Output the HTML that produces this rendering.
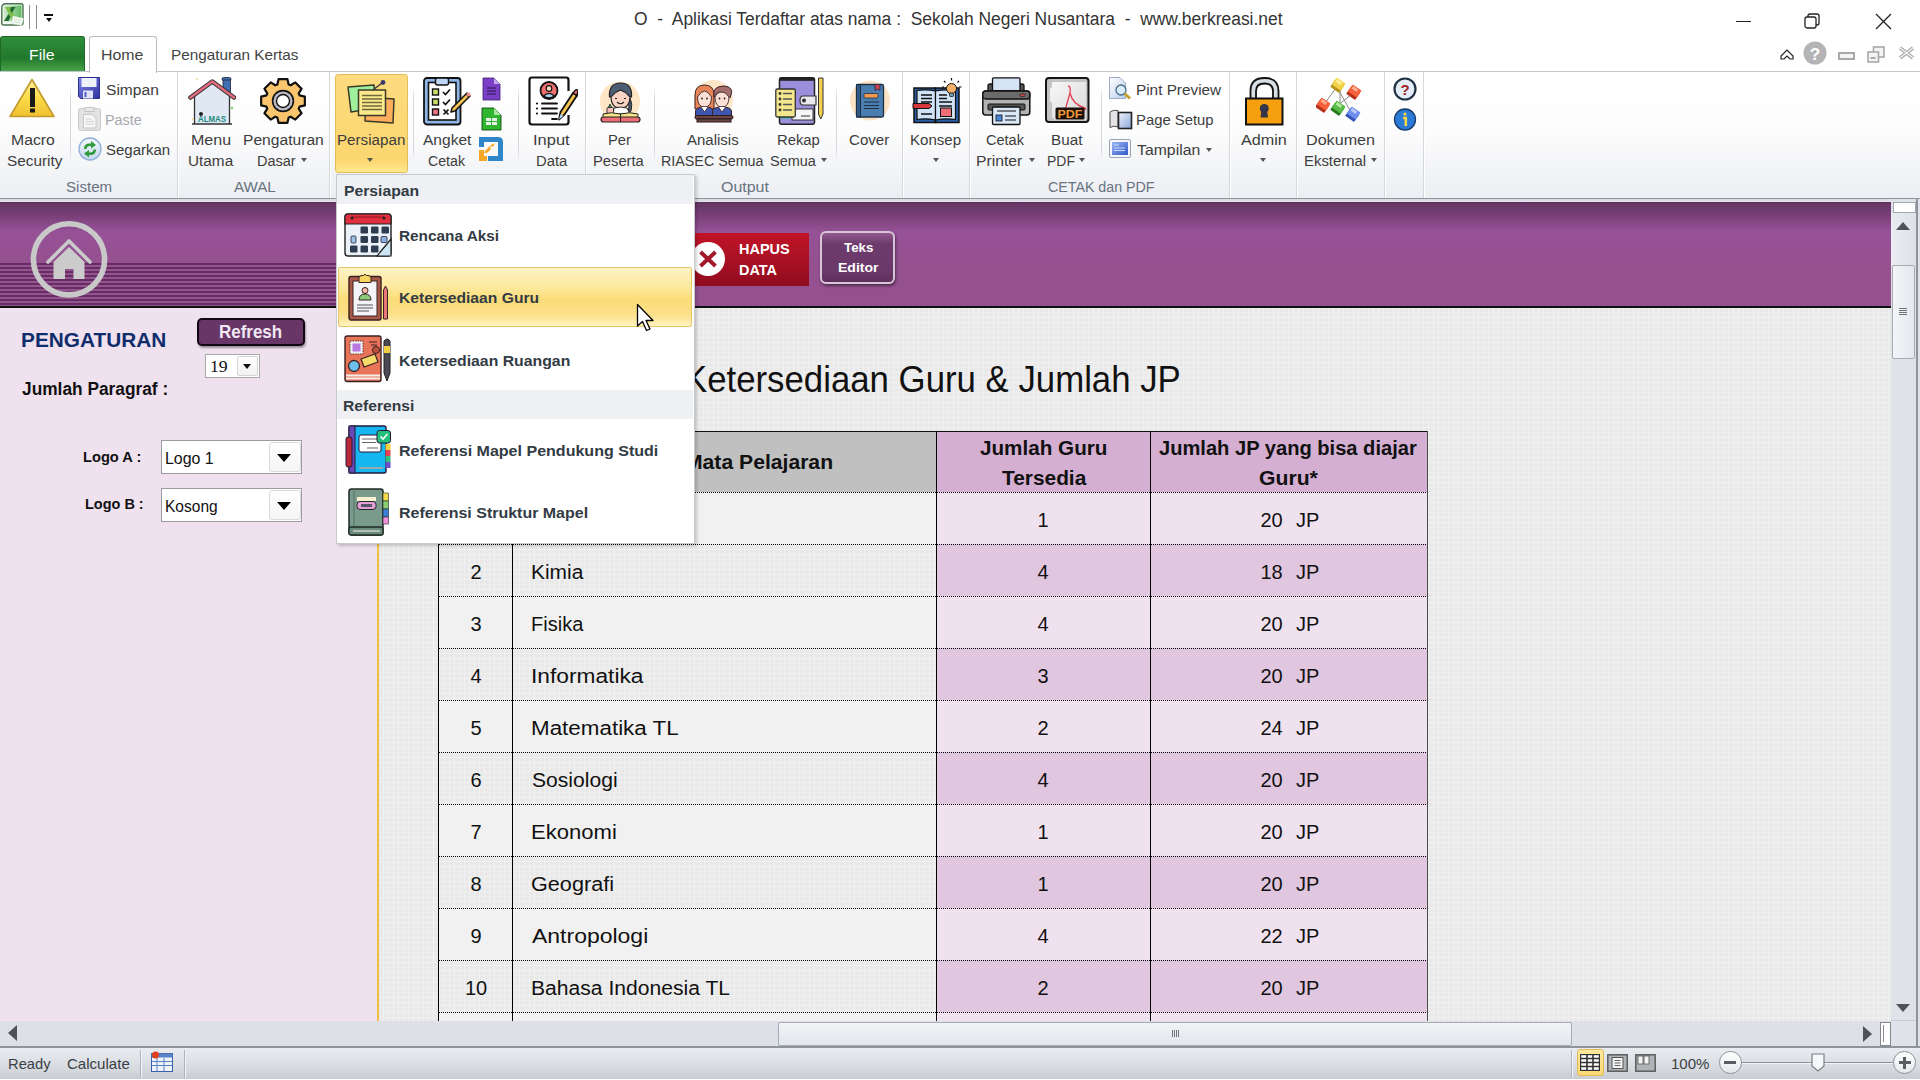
<!DOCTYPE html>
<html><head><meta charset="utf-8">
<style>
*{margin:0;padding:0;box-sizing:border-box}
html,body{width:1920px;height:1080px;overflow:hidden;background:#fff;font-family:"Liberation Sans",sans-serif;position:relative}
.a{position:absolute}
.f{position:absolute;white-space:pre;line-height:1;transform-origin:0 0}
.rl{color:#3d3d3d;font-size:14px}
.gl{color:#687380;font-size:14px}
.mi{color:#333b44;font-size:15px;font-weight:bold}
.sep{position:absolute;width:1px;background:linear-gradient(rgba(210,214,220,0),#d3d7dd 15%,#d3d7dd 85%,rgba(210,214,220,0))}
.gsep{position:absolute;top:72px;height:126px;width:1px;background:#d5d9de;box-shadow:1px 0 0 #fff}
.arr{position:absolute;width:0;height:0;border-left:3.5px solid transparent;border-right:3.5px solid transparent;border-top:4px solid #555}
#title{left:0;top:0;width:1920px;height:36px;background:#fff}
#ribbon{left:0;top:71px;width:1920px;height:128px;background:linear-gradient(#fff 0%,#fdfdfd 45%,#eceef2 100%);border-top:1px solid #c2c6cc;border-bottom:1px solid #8e949b}
#sheet{left:0;top:199px;width:1920px;height:822px;background:#d9dde3}
#grid{left:378px;top:307px;width:1513px;height:714px;background-color:#e9e9e9;
background-image:linear-gradient(90deg,rgba(244,244,244,.75) 1px,transparent 1px),linear-gradient(rgba(244,244,244,.75) 1px,transparent 1px);background-size:5px 5px}
#phead{left:0;top:202px;width:1891px;height:104px;background:linear-gradient(#58305a 0px,#663767 2px,#7a4079 14px,#975297 30px,#94508f 60px,#94508f 104px)}
#stripes{left:0;top:263px;width:378px;height:43px;background:repeating-linear-gradient(#682c64 0px,#682c64 2px,#94548e 2px,#94548e 4px)}
#pline{left:0;top:306px;width:1891px;height:2px;background:#111}
#pink{left:0;top:308px;width:378px;height:713px;background:#f0e1ef}
#yline{left:377px;top:308px;width:2px;height:713px;background:#f2c040}
#hscroll{left:0;top:1021px;width:1891px;height:25px;background:#dde1e7}
#status{left:0;top:1046px;width:1920px;height:33px;background:linear-gradient(#e9ecf0,#d5d9de 70%,#c9cdd3);border-top:2px solid #8e949b}
.tex{background-color:#e9e9e9;background-image:linear-gradient(90deg,rgba(244,244,244,.75) 1px,transparent 1px),linear-gradient(rgba(244,244,244,.75) 1px,transparent 1px);background-size:5px 5px}
.dot{left:439px;width:988px;height:1px;background:repeating-linear-gradient(90deg,#000 0,#000 1px,transparent 1px,transparent 2px)}
.th{font-weight:bold;color:#111}
.td{font-size:20px;color:#111}
.tc{width:100px;text-align:center;font-size:20px;line-height:1;color:#111;white-space:pre}
</style></head><body>
<!-- TITLE BAR -->
<div id="title" class="a"></div>
<svg class="a" style="left:1px;top:3px" width="23" height="23" viewBox="0 0 23 23">
 <defs><linearGradient id="xg" x1="0" y1="0" x2="1" y2="0"><stop offset="0" stop-color="#d4ead2"></stop><stop offset="1" stop-color="#5fb860"></stop></linearGradient></defs>
 <path d="M5 0.8 H20 Q22 0.8 22 2.8 V20 Q22 22 20 22 H2.8 Q0.8 22 0.8 20 V5 Q0.8 0.8 5 0.8Z" fill="#f4faf4" stroke="#45724a" stroke-width="1.4"></path>
 <rect x="2.5" y="2.5" width="18" height="16" fill="url(#xg)"></rect>
 <path d="M4 4 H9 L16 17 H11Z" fill="#7cbf4a"></path>
 <path d="M10 4 H14.5 L11 10 L9 7Z M7.5 11 L9.5 14 L7.5 18 H3Z" fill="#1f6b30"></path>
 <path d="M12 13 L22.5 15.5 L20.5 22.5 L10.5 20.5Z" fill="#fbfdfb" stroke="#cfe3cf" stroke-width=".6"></path>
 <path d="M13 16 L20 17.5 M12.5 18.5 L19.5 20" stroke="#b9d6b9" stroke-width=".8"></path>
</svg>
<div class="a" style="left:29px;top:5px;width:1px;height:24px;background:#8c8c8c"></div>
<div class="a" style="left:36px;top:5px;width:1px;height:24px;background:#8c8c8c"></div>
<div class="a" style="left:44px;top:14px;width:9px;height:1.5px;background:#111"></div>
<div class="a" style="left:46px;top:18px;width:0;height:0;border-left:3px solid transparent;border-right:3px solid transparent;border-top:4px solid #111"></div>
<div class="f" style="left: 634px; top: 9.763px; width: auto; font-size: 18px; color: rgb(51, 51, 51); transform: scaleX(0.968);">O  -  Aplikasi Terdaftar atas nama :  Sekolah Negeri Nusantara  -  www.berkreasi.net</div>
<!-- window controls -->
<div class="a" style="left:1736px;top:21px;width:15px;height:1px;background:#222"></div>
<svg class="a" style="left:1804px;top:13px" width="17" height="17" viewBox="0 0 17 17"><rect x="1" y="4" width="11" height="11" rx="2" fill="none" stroke="#222" stroke-width="1.3"></rect><path d="M4 4 V3 a2 2 0 0 1 2 -2 H13 a2 2 0 0 1 2 2 V10 a2 2 0 0 1 -2 2 H12" fill="none" stroke="#222" stroke-width="1.3"></path></svg>
<svg class="a" style="left:1875px;top:13px" width="17" height="17" viewBox="0 0 17 17"><path d="M1 1 L16 16 M16 1 L1 16" stroke="#222" stroke-width="1.3"></path></svg>
<!-- TABS -->
<div class="a" style="left:0;top:36px;width:85px;height:36px;border-radius:3px 3px 0 0;background:linear-gradient(#2f8f3a,#22782c 60%,#4ca64a);border:1px solid #1d6a27;border-bottom:none"></div>
<div class="f" style="left: 28.948px; top: 47.302px; width: auto; font-size: 15px; color: rgb(255, 255, 255); transform: scaleX(1.051);">File</div>
<div class="a" style="left:89px;top:36px;width:68px;height:37px;border:1px solid #b9bdc3;border-bottom:none;border-radius:3px 3px 0 0;background:#fff;z-index:3"></div>
<div class="f" style="left: 101.44px; top: 47.302px; width: auto; font-size: 15px; color: rgb(68, 68, 68); z-index: 4; transform: scaleX(1.060);">Home</div>
<div class="f" style="left: 171.48px; top: 47.302px; width: auto; font-size: 15px; color: rgb(68, 68, 68); transform: scaleX(1.019);">Pengaturan Kertas</div>
<!-- small right icons -->
<svg class="a" style="left:1780px;top:49px" width="14" height="11" viewBox="0 0 14 11"><path d="M1 10 V7 L7 1 L13 7 V10 H10 L7 7 L4 10Z" fill="#fff" stroke="#222" stroke-width="1.2"></path></svg>
<svg class="a" style="left:1803px;top:41px" width="24" height="24" viewBox="0 0 24 24"><circle cx="12" cy="12" r="11.5" fill="#b4b4b6"></circle><text x="12" y="18.5" font-family="Liberation Sans" font-weight="bold" font-size="17" fill="#fff" text-anchor="middle">?</text></svg>
<div class="a" style="left:1838px;top:52px;width:17px;height:8px;border:2px solid #a9a9ab;background:#f4f4f4"></div>
<svg class="a" style="left:1867px;top:46px" width="18" height="17" viewBox="0 0 18 17"><rect x="6.5" y="1" width="10.5" height="10" fill="#f4f4f4" stroke="#a9a9ab" stroke-width="1.6"></rect><rect x="1" y="6" width="10.5" height="10" fill="#f4f4f4" stroke="#a9a9ab" stroke-width="1.6"></rect><rect x="3.5" y="11" width="5" height="2" fill="#a9a9ab"></rect></svg>
<svg class="a" style="left:1898px;top:46px" width="17" height="14" viewBox="0 0 17 14"><path d="M2 2 L15 12 M15 2 L2 12" stroke="#a9a9ab" stroke-width="3.5"></path><path d="M2 2 L15 12 M15 2 L2 12" stroke="#f4f4f4" stroke-width="1.4"></path></svg>
<!-- RIBBON -->
<div id="ribbon" class="a"></div>
<div class="a" style="left:0;top:71px;width:89px;height:1px;background:#c2c6cc;z-index:2"></div>
<!-- group separators -->
<div class="gsep" style="left:177px"></div>
<div class="gsep" style="left:329px"></div>
<div class="gsep" style="left:585px"></div>
<div class="gsep" style="left:902px"></div>
<div class="gsep" style="left:969px"></div>
<div class="gsep" style="left:1229px"></div>
<div class="gsep" style="left:1296px"></div>
<div class="gsep" style="left:1384px"></div>
<div class="gsep" style="left:1423px"></div>
<!-- inner separators -->
<div class="sep" style="left:70px;top:87px;height:73px"></div>
<div class="sep" style="left:413px;top:87px;height:73px"></div>
<div class="sep" style="left:518px;top:87px;height:73px"></div>
<div class="sep" style="left:654px;top:87px;height:73px"></div>
<div class="sep" style="left:836px;top:87px;height:73px"></div>
<div class="sep" style="left:1101px;top:87px;height:73px"></div>
<!-- group labels -->
<div class="f gl" style="left: 65.6px; top: 179.549px; width: auto; transform: scaleX(1.077);">Sistem</div>
<div class="f gl" style="left: 233.7px; top: 179.549px; width: auto; transform: scaleX(1.081);">AWAL</div>
<div class="f gl" style="left: 720.6px; top: 179.549px; width: auto; transform: scaleX(1.139);">Output</div>
<div class="f gl" style="left: 1047.5px; top: 179.549px; width: auto; transform: scaleX(1.017);">CETAK dan PDF</div>
<!-- Persiapan highlight button -->
<div class="a" style="left:335px;top:74px;width:73px;height:99px;border:1px solid #e3bd5a;border-radius:3px;background:linear-gradient(#fddb7e 0%,#fcd874 60%,#fcd670 88%,#fee98e 100%)"></div>
<!-- ribbon labels -->
<div class="f rl" style="left: 11.371px; top: 132.649px; width: auto; transform: scaleX(1.128);">Macro</div>
<div class="f rl" style="left: 6.5px; top: 153.649px; width: auto; transform: scaleX(1.097);">Security</div>
<div class="f rl" style="left: 105.6px; top: 83.149px; width: auto; transform: scaleX(1.113);">Simpan</div>
<div class="f rl" style="left: 104.972px; top: 113.149px; width: auto; color: rgb(165, 169, 174); transform: scaleX(1.028);">Paste</div>
<div class="f rl" style="left: 106px; top: 143.149px; width: auto; transform: scaleX(1.071);">Segarkan</div>
<div class="f rl" style="left: 190.757px; top: 132.649px; width: auto; transform: scaleX(1.143);">Menu</div>
<div class="f rl" style="left: 187.605px; top: 153.649px; width: auto; transform: scaleX(1.095);">Utama</div>
<div class="f rl" style="left: 242.584px; top: 132.649px; width: auto; transform: scaleX(1.116);">Pengaturan</div>
<div class="f rl" style="left: 256.964px; top: 153.649px; width: auto; transform: scaleX(1.035);">Dasar</div>
<div class="arr" style="left:301px;top:158px"></div>
<div class="f rl" style="left: 336.916px; top: 132.649px; width: auto; transform: scaleX(1.084);">Persiapan</div>
<div class="arr" style="left:367px;top:158px"></div>
<div class="f rl" style="left: 422.5px; top: 132.649px; width: auto; transform: scaleX(1.109);">Angket</div>
<div class="f rl" style="left: 427.5px; top: 153.649px; width: auto; transform: scaleX(1.011);">Cetak</div>
<div class="f rl" style="left: 533.223px; top: 132.649px; width: auto; transform: scaleX(1.176);">Input</div>
<div class="f rl" style="left: 535.94px; top: 153.649px; width: auto; transform: scaleX(1.059);">Data</div>
<div class="f rl" style="left: 607.644px; top: 132.649px; width: auto; transform: scaleX(1.055);">Per</div>
<div class="f rl" style="left: 593.347px; top: 153.649px; width: auto; transform: scaleX(1.053);">Peserta</div>
<div class="f rl" style="left: 687px; top: 132.649px; width: auto; transform: scaleX(1.071);">Analisis</div>
<div class="f rl" style="left: 660.979px; top: 153.649px; width: auto; transform: scaleX(1.021);">RIASEC Semua</div>
<div class="f rl" style="left: 776.942px; top: 132.649px; width: auto; transform: scaleX(1.058);">Rekap</div>
<div class="f rl" style="left: 770px; top: 153.649px; width: auto; transform: scaleX(1.032);">Semua</div>
<div class="arr" style="left:821px;top:158px"></div>
<div class="f rl" style="left: 849.4px; top: 132.649px; width: auto; transform: scaleX(1.077);">Cover</div>
<div class="f rl" style="left: 909.925px; top: 132.649px; width: auto; transform: scaleX(1.075);">Konsep</div>
<div class="arr" style="left:932.5px;top:158px"></div>
<div class="f rl" style="left: 986px; top: 132.649px; width: auto; transform: scaleX(1.038);">Cetak</div>
<div class="f rl" style="left: 976.379px; top: 153.649px; width: auto; transform: scaleX(1.121);">Printer</div>
<div class="arr" style="left:1028.5px;top:158px"></div>
<div class="f rl" style="left: 1050.91px; top: 132.649px; width: auto; transform: scaleX(1.092);">Buat</div>
<div class="f rl" style="left: 1047px; top: 153.649px; width: auto; transform: scaleX(0.998);">PDF</div>
<div class="arr" style="left:1078.5px;top:158px"></div>
<div class="f rl" style="left: 1135.91px; top: 83.149px; width: auto; transform: scaleX(1.094);">Pint Preview</div>
<div class="f rl" style="left: 1135.94px; top: 113.149px; width: auto; transform: scaleX(1.059);">Page Setup</div>
<div class="f rl" style="left: 1137px; top: 143.149px; width: auto; transform: scaleX(1.129);">Tampilan</div>
<div class="arr" style="left:1205.5px;top:148px"></div>
<div class="f rl" style="left: 1240.6px; top: 132.649px; width: auto; transform: scaleX(1.156);">Admin</div>
<div class="arr" style="left:1260.2px;top:158px"></div>
<div class="f rl" style="left: 1306.35px; top: 132.649px; width: auto; transform: scaleX(1.152);">Dokumen</div>
<div class="f rl" style="left: 1303.93px; top: 153.649px; width: auto; transform: scaleX(1.065);">Eksternal</div>
<div class="arr" style="left:1371px;top:158px"></div>
<!-- RIBBON ICONS -->
<svg class="a" style="left:8px;top:78px" width="48" height="41" viewBox="0 0 48 41">
 <defs><linearGradient id="wg" x1="0" y1="0" x2="0" y2="1"><stop offset="0" stop-color="#fff3a0"></stop><stop offset=".5" stop-color="#fbdc4a"></stop><stop offset="1" stop-color="#f0c030"></stop></linearGradient></defs>
 <path d="M24 1.5 L46 38.5 H2 Z" fill="url(#wg)" stroke="#c29a2e" stroke-width="1.6" stroke-linejoin="round"></path>
 <rect x="22" y="10" width="5" height="19" fill="#1a1a1a"></rect><rect x="22" y="30.5" width="5" height="4" fill="#1a1a1a"></rect>
</svg>
<svg class="a" style="left:78px;top:77px" width="23" height="23" viewBox="0 0 23 23">
 <defs><linearGradient id="fg" x1="0" y1="0" x2="1" y2="1"><stop offset="0" stop-color="#7c82e8"></stop><stop offset="1" stop-color="#2f33a0"></stop></linearGradient></defs>
 <path d="M0.5 0.5 H21.5 V21.5 H2.5 L0.5 19.5Z" fill="url(#fg)" stroke="#2a2e8c"></path>
 <rect x="3.5" y="1" width="15" height="9" fill="#eef0fa"></rect>
 <rect x="5" y="13.5" width="10" height="8" fill="#dfe3f5"></rect><rect x="6.5" y="15" width="2" height="5" fill="#5860c8"></rect>
</svg>
<svg class="a" style="left:78px;top:107px" width="24" height="24" viewBox="0 0 24 24">
 <rect x="0.5" y="1.5" width="22" height="22" rx="2" fill="#e2e2e5" stroke="#cacacd"></rect>
 <rect x="7" y="0.5" width="9" height="4" fill="#e9e9ec" stroke="#c5c5c8"></rect>
 <path d="M5.5 7.5 H14 L18 11.5 V21 H5.5Z" fill="#f7f7f8" stroke="#c8c8cb"></path>
 <path d="M7.5 12 H13 M7.5 14.5 H16 M7.5 17 H16" stroke="#d0d0d3"></path>
</svg>
<svg class="a" style="left:78px;top:137px" width="24" height="24" viewBox="0 0 24 24">
 <defs><linearGradient id="sg" x1="0" y1="0" x2="0" y2="1"><stop offset="0" stop-color="#f4f8fd"></stop><stop offset="1" stop-color="#c4d8f0"></stop></linearGradient></defs>
 <circle cx="12" cy="12" r="11" fill="url(#sg)" stroke="#8fb0d8" stroke-width="1.3"></circle>
 <path d="M6 12 C6 7.5 9 6 13 6.5 V4 L18 8 L13 11.5 V9 C10 8.5 8.5 10 8.5 12Z" fill="#2e9a3a"></path>
 <path d="M18 12.5 C18 17 15 18.5 11 18 V20.5 L6 16.5 L11 13 V15.5 C14 16 15.5 14.5 15.5 12.5Z" fill="#2e9a3a"></path>
</svg>
<svg class="a" style="left:188px;top:76px" width="48" height="50" viewBox="0 0 48 50">
 <rect x="34" y="1.5" width="9" height="3" rx="1.5" fill="#3f6fb5" stroke="#223" stroke-width=".8"></rect>
 <rect x="35" y="4" width="7.5" height="12" fill="#3f6fb5" stroke="#223" stroke-width=".8"></rect>
 <path d="M6.5 20 L24 7 L41.5 20 V48 H6.5Z" fill="#dfe8f3"></path>
 <path d="M6.5 20 V48 M41.5 20 V48 M4 48 H44" stroke="#333" stroke-width="1.3"></path>
 <path d="M2.5 21.5 L24.3 5.5 L46 21.5" fill="none" stroke="#333" stroke-width="4.6" stroke-linecap="round" stroke-linejoin="round"></path>
 <path d="M2.5 21.5 L24.3 5.5 L46 21.5" fill="none" stroke="#e46a7c" stroke-width="2.6" stroke-linecap="round" stroke-linejoin="round"></path>
 <text x="24" y="46" font-family="Liberation Sans" font-weight="bold" font-size="9.5" fill="#208a80" text-anchor="middle" textLength="28" lengthAdjust="spacingAndGlyphs">ALMAS</text>
 <circle cx="13" cy="38" r="2" fill="#222"></circle>
 <circle cx="44" cy="32" r="1.2" fill="#7ad060"></circle><circle cx="5" cy="43" r="1" fill="#f0d890"></circle><circle cx="9" cy="3" r="1" fill="#f0d890"></circle>
</svg>
<svg class="a" style="left:259px;top:77px" width="48" height="48" viewBox="0 0 48 48">
 <path d="M40.56 18.33 L45.86 19.57 L45.86 28.43 L40.56 29.67 L39.72 31.70 L42.59 36.32 L36.32 42.59 L31.70 39.72 L29.67 40.56 L28.43 45.86 L19.57 45.86 L18.33 40.56 L16.30 39.72 L11.68 42.59 L5.41 36.32 L8.28 31.70 L7.44 29.67 L2.14 28.43 L2.14 19.57 L7.44 18.33 L8.28 16.30 L5.41 11.68 L11.68 5.41 L16.30 8.28 L18.33 7.44 L19.57 2.14 L28.43 2.14 L29.67 7.44 L31.70 8.28 L36.32 5.41 L42.59 11.68 L39.72 16.30Z" fill="#fac56c" stroke="#111" stroke-width="2.2" stroke-linejoin="round"></path>
 <circle cx="24" cy="24" r="11.2" fill="#111"></circle>
 <circle cx="24" cy="24" r="9.6" fill="#b9bac4"></circle>
 <circle cx="24" cy="24" r="7.2" fill="#111"></circle>
 <circle cx="24" cy="24" r="5.8" fill="#fff"></circle>
</svg>
<svg class="a" style="left:346px;top:80px" width="50" height="44" viewBox="0 0 50 44">
 <path d="M2 7 L28 5 L30 28 L5 32Z" fill="#9ff09a" stroke="#3a3a2a" stroke-width="1.5" stroke-linejoin="round"></path>
 <path d="M20 17 L48 19 L47 43 L19 41Z" fill="#fcae5c" stroke="#3a3a2a" stroke-width="1.5" stroke-linejoin="round"></path>
 <rect x="12.5" y="10" width="27" height="25.5" fill="#fbe98c" stroke="#3a3a2a" stroke-width="1.5"></rect>
 <path d="M16 15.5 H36 M16 19 H36 M16 22.5 H36 M16 26 H36 M16 29.5 H36" stroke="#6e6a3c" stroke-width="1.6"></path>
 <path d="M27 10 L36 3" stroke="#333" stroke-width="1.2"></path><circle cx="37" cy="2.5" r="2.4" fill="#3a3a6a"></circle>
</svg>
<svg class="a" style="left:423px;top:77px" width="48" height="49" viewBox="0 0 48 49">
 <rect x="1" y="1" width="36.5" height="46.5" rx="3" fill="#8db6e6" stroke="#111" stroke-width="1.8"></rect>
 <rect x="5.5" y="5.5" width="27.5" height="37.5" fill="#fff" stroke="#111" stroke-width="1.6"></rect>
 <rect x="12.5" y="1" width="13" height="7" rx="2" fill="#bcd6f4" stroke="#111" stroke-width="1.4"></rect>
 <rect x="9.5" y="12" width="6" height="6" fill="#c8e06a" stroke="#111" stroke-width="1.4"></rect>
 <rect x="9.5" y="22" width="6" height="6" fill="#c8e06a" stroke="#111" stroke-width="1.4"></rect>
 <rect x="9.5" y="32" width="6" height="6" fill="#f07484" stroke="#111" stroke-width="1.4"></rect>
 <path d="M20 15 L22.5 17.5 L27 12.5 M20 25 L22.5 27.5 L27 22.5 M20.5 32.5 L25.5 37.5 M25.5 32.5 L20.5 37.5" fill="none" stroke="#111" stroke-width="1.7"></path>
 <path d="M29 31 L44 16 L47 19 L32 34 L28 35Z" fill="#f6c453" stroke="#111" stroke-width="1.5" stroke-linejoin="round"></path>
 <path d="M43 17 L46 20" stroke="#111" stroke-width="1.2"></path><circle cx="45.5" cy="17.5" r="2" fill="#f08b8b"></circle>
</svg>
<svg class="a" style="left:482px;top:77px" width="19" height="24" viewBox="0 0 19 24">
 <path d="M1 1 H12 L18 7 V23 H1Z" fill="#7b3fc6" stroke="#3a1f6e" stroke-width=".8"></path>
 <path d="M12 1 V7 H18Z" fill="#c6a9ec"></path>
 <path d="M5 11 H14 M5 14 H14 M5 17 H14" stroke="#3f2577" stroke-width="1.4"></path>
</svg>
<svg class="a" style="left:481px;top:107px" width="21" height="24" viewBox="0 0 21 24">
 <path d="M1 1 H13 L20 8 V23 H1Z" fill="#2fb52f" stroke="#134a13" stroke-width=".9"></path>
 <path d="M13 1 V8 H20Z" fill="#a6e6a0"></path>
 <rect x="5" y="11" width="11" height="7" fill="#e9eee9"></rect><path d="M5 14.5 H16 M10.5 11 V18" stroke="#2fb52f" stroke-width="1"></path>
</svg>
<svg class="a" style="left:479px;top:137px" width="24" height="24" viewBox="0 0 24 24">
 <path d="M0 0 H19 Q24 0 24 5 V24 H9 V19 H19 V5 H5 V10 H0Z" fill="#2f86c8"></path>
 <path d="M0 13 H5 V19 H8 V24 H0Z" fill="#f5a623"></path>
 <path d="M5 16 L8 16 L14 10 L16 6 L12 8 L6 14Z" fill="#f5a623"></path>
 <circle cx="12.5" cy="10.5" r="1.3" fill="#fff"></circle>
</svg>
<svg class="a" style="left:528px;top:76px" width="50" height="50" viewBox="0 0 50 50">
 <path d="M40.5 15 V4 Q40.5 1.5 38 1.5 H4 Q1.5 1.5 1.5 4 V46 Q1.5 48.5 4 48.5 H38 Q40.5 48.5 40.5 46 V39" fill="#fff" stroke="#111" stroke-width="2.2"></path>
 <path d="M1.5 4 V46 M4 48.5 H38" fill="none"></path>
 <circle cx="21" cy="14.5" r="8.5" fill="#f07070" stroke="#111" stroke-width="1.8"></circle>
 <circle cx="21" cy="12.5" r="2.8" fill="#f8d9c0" stroke="#111" stroke-width="1.2"></circle>
 <path d="M15.5 20 Q21 14.5 26.5 20 Q21 23.5 15.5 20Z" fill="#a8d4f2" stroke="#111" stroke-width="1.2"></path>
 <path d="M14 27.5 H29 M14 32.5 H29 M14 37.5 H29 M24 43 H29" stroke="#111" stroke-width="1.8" stroke-linecap="round"></path>
 <circle cx="9" cy="27.5" r="1.1" fill="#111"></circle><circle cx="9" cy="32.5" r="1.1" fill="#111"></circle><circle cx="9" cy="37.5" r="1.1" fill="#111"></circle>
 <path d="M31 43.5 L32.5 36 L45 17 L49 19.5 L36.5 38.5Z" fill="#f6c453" stroke="#111" stroke-width="1.8" stroke-linejoin="round"></path>
 <path d="M45 17 L47 14.5 Q48.5 13 50 14.5 L49 19.5Z" fill="#f07070" stroke="#111" stroke-width="1.4"></path>
 <path d="M31 43.5 L32.5 38 L35.5 40Z" fill="#a8d4f2"></path>
</svg>
<svg class="a" style="left:599px;top:80px" width="43" height="43" viewBox="0 0 43 43">
 <circle cx="21" cy="21.5" r="20" fill="#fde5c6"></circle>
 <path d="M31 18 Q34 24 32 31 L29 33 Q31 26 29 20Z" fill="#4d5d74" stroke="#222" stroke-width="1"></path>
 <path d="M12 16 Q12 28 21.5 28 Q31 28 31 16 Q31 9 21.5 9 Q12 9 12 16Z" fill="#f9d3c4" stroke="#222" stroke-width="1.2"></path>
 <path d="M10.5 17 Q9.5 3 21.5 3 Q33.5 3 32.5 17 L30 16 Q27 12 21.5 10 Q16 12 13 16Z" fill="#4d5d74" stroke="#222" stroke-width="1.2"></path>
 <path d="M18 22 Q21.5 25.5 25 22" fill="none" stroke="#222" stroke-width="1.1"></path>
 <path d="M16 18.5 H18 M25 18.5 H27" stroke="#222" stroke-width="1.2"></path>
 <path d="M14 34 L15 28 Q21.5 26 28 28 L31 34Z" fill="#fff" stroke="#222" stroke-width="1"></path>
 <path d="M9 28 L11 24 L13 28" fill="#2f9a78" stroke="#222" stroke-width=".8"></path>
 <rect x="8" y="27.5" width="6.5" height="6" rx="1" fill="#f8c0b8" stroke="#222" stroke-width=".9"></rect>
 <path d="M4 37.5 V34 Q12 31.5 21.5 34 Q31 31.5 39 34 V37.5Z" fill="#f6e58a" stroke="#222" stroke-width="1"></path>
 <rect x="2" y="37" width="39" height="5" rx="2.5" fill="#ee6e76" stroke="#222" stroke-width="1.2"></rect>
 <path d="M21.5 34 V42" stroke="#222" stroke-width="1"></path>
</svg>
<svg class="a" style="left:692px;top:80px" width="43" height="43" viewBox="0 0 43 43">
 <circle cx="21.5" cy="19.5" r="19.5" fill="#fde6c8"></circle>
 <path d="M3 29 V15 Q3 5 12.5 5 Q22 5 22 15 V29Z" fill="#e8845a" stroke="#3a2323" stroke-width="1"></path>
 <path d="M5.5 17 Q5.5 27 12.5 27 Q19.5 27 19.5 17 Q16 11 12.5 11 Q9 11 5.5 17Z" fill="#fbe0d8" stroke="#3a2323" stroke-width=".9"></path>
 <path d="M22 17 Q20 6 32 6 Q42 7 39 15 L38 18 Q33 12 27 12 Q23 14 22 17Z" fill="#a66e6e" stroke="#3a2323" stroke-width="1"></path>
 <path d="M23 17 Q23 27 30 27 Q37 27 37 17 Q34 12 30 12 Q25 12 23 17Z" fill="#fbe0d8" stroke="#3a2323" stroke-width=".9"></path>
 <circle cx="10" cy="18.5" r=".9" fill="#222"></circle><circle cx="15" cy="18.5" r=".9" fill="#222"></circle><circle cx="27.5" cy="18.5" r=".9" fill="#222"></circle><circle cx="32.5" cy="18.5" r=".9" fill="#222"></circle>
 <path d="M3.5 36 V31 Q4 27 12.5 27 Q21 27 21.5 31 V36Z" fill="#3f56b0" stroke="#3a2323" stroke-width="1"></path>
 <path d="M20.5 36 V31 Q21 27 30 27 Q39 27 39.5 31 V36Z" fill="#3f56b0" stroke="#3a2323" stroke-width="1"></path>
 <path d="M9 27 L12.5 32 L16 27 M26.5 27 L30 32 L33.5 27" fill="#fff" stroke="#3a2323" stroke-width=".8"></path>
 <rect x="3" y="35.5" width="38" height="3.5" rx="1.5" fill="#6b4444" stroke="#2a1a1a" stroke-width="1"></rect>
 <rect x="5" y="39" width="34" height="3" fill="#6b4444" stroke="#2a1a1a" stroke-width="1"></rect>
</svg>
<svg class="a" style="left:775px;top:77px" width="49" height="48" viewBox="0 0 49 48">
 <rect x="4.5" y="0.8" width="35" height="46.5" rx="2" fill="#9b8fdb" stroke="#222" stroke-width="1.5"></rect>
 <rect x="4.5" y="0.8" width="35" height="3" fill="#222"></rect>
 <rect x="17" y="32" width="21" height="11" fill="#f6f6f8" stroke="#333" stroke-width="1"></rect>
 <path d="M26 39 H35" stroke="#555" stroke-width="1.2"></path>
 <rect x="5" y="37.5" width="10" height="4" fill="#2fc88e"></rect>
 <path d="M28 19 H41 V28 H28 Q25 28 25 23.5 Q25 19 28 19Z" fill="#e8e8ee" stroke="#333" stroke-width="1.2"></path>
 <circle cx="29" cy="23.5" r="2" fill="#333"></circle>
 <rect x="0.8" y="12" width="19.5" height="28" rx="1.5" fill="#f3e68c" stroke="#333" stroke-width="1.3"></rect>
 <path d="M8 16.5 H17 M8 22 H17 M8 27.5 H17 M8 33 H17" stroke="#555" stroke-width="1.5"></path>
 <circle cx="5" cy="16.5" r="1.4" fill="#333"></circle><circle cx="5" cy="22" r="1.4" fill="#333"></circle><circle cx="5" cy="27.5" r="1.4" fill="#333"></circle><circle cx="5" cy="33" r="1.4" fill="#333"></circle>
 <path d="M43.5 1 H48 V37 L45.75 42 L43.5 37Z" fill="#f0d050" stroke="#333" stroke-width="1"></path>
</svg>
<svg class="a" style="left:849px;top:80px" width="43" height="43" viewBox="0 0 43 43">
 <circle cx="21" cy="20.5" r="20" fill="#fde3c6"></circle>
 <rect x="7.5" y="4.5" width="27" height="32.5" rx="1.5" fill="#4a7eb0" stroke="#1f2f44" stroke-width="1.3"></rect>
 <rect x="7.5" y="4.5" width="4" height="32.5" fill="#2f5a88" stroke="#1f2f44" stroke-width="1"></rect>
 <rect x="15" y="13.5" width="14" height="4.5" rx="1" fill="#f39a50" stroke="#1f2f44" stroke-width=".8"></rect>
 <path d="M15 22 H30 M15 25.5 H30 M15 28.5 H30" stroke="#1f2f44" stroke-width="1.2"></path>
 <path d="M26 4.5 V10.5 L28.5 9 L31 10.5 V4.5Z" fill="#d04050" stroke="#1f2f44" stroke-width=".8"></path>
</svg>
<svg class="a" style="left:912px;top:77px" width="50" height="48" viewBox="0 0 50 48">
 <path d="M2 11 H23.5 V45.5 H2Z" fill="#2a5fa8" stroke="#111" stroke-width="1.5"></path>
 <path d="M23.5 11 H47 V45.5 H23.5Z" fill="#2a5fa8" stroke="#111" stroke-width="1.5"></path>
 <path d="M5 13.5 Q14 12 23.5 14 V43 Q14 41 5 42.5Z" fill="#cfe2f6" stroke="#111" stroke-width="1.2"></path>
 <path d="M23.5 14 Q33 12 43.5 13.5 V42.5 Q33 41 23.5 43Z" fill="#cfe2f6" stroke="#111" stroke-width="1.2"></path>
 <path d="M9 18 H20 M9 21.5 H20 M9 25 H20 M9 37 H20 M27 18 H35 M27 21.5 H35 M27 25 H40 M27 29 H40" stroke="#111" stroke-width="1.3"></path>
 <path d="M1 26.5 H17 L20 29 L17 31.5 H1Z" fill="#d8363e" stroke="#111" stroke-width="1"></path>
 <rect x="28.5" y="31" width="11" height="8.5" fill="#ef6f78" stroke="#111" stroke-width="1"></rect>
 <circle cx="39.5" cy="11.5" r="5" fill="#f6b26b" stroke="#111" stroke-width="1"></circle>
 <rect x="37.5" y="16" width="4" height="3.5" rx="1" fill="#7a9ab0" stroke="#111" stroke-width=".8"></rect>
 <path d="M39.5 1 V3.5 M32 4 L33.5 5.5 M47 4 L45.5 5.5 M30 10 H32 M47 10 H49.5" stroke="#111" stroke-width="1.2"></path>
</svg>
<svg class="a" style="left:982px;top:77px" width="49" height="49" viewBox="0 0 49 49">
 <rect x="6" y="7" width="36" height="10" rx="2" fill="#555" stroke="#111" stroke-width="1.3"></rect>
 <rect x="10.5" y="0.8" width="27.5" height="13" rx="1.2" fill="#d5e3f5" stroke="#111" stroke-width="1.3"></rect>
 <rect x="0.8" y="14" width="47" height="24" rx="3" fill="#b4b4b4" stroke="#111" stroke-width="1.5"></rect>
 <rect x="0.8" y="14" width="47" height="8" rx="3" fill="#6b6b6b" stroke="#111" stroke-width="1.3"></rect>
 <rect x="38" y="17" width="5" height="2.5" rx="1" fill="#d04848" stroke="#111" stroke-width=".6"></rect>
 <rect x="6" y="27" width="37" height="6" rx="1" fill="#555" stroke="#111" stroke-width="1"></rect>
 <rect x="10.5" y="30" width="27.5" height="17.5" rx="1" fill="#dae7f6" stroke="#111" stroke-width="1.3"></rect>
 <rect x="14" y="38" width="6" height="6" fill="#4a86d8" stroke="#111" stroke-width=".8"></rect>
 <path d="M15 34 H34 M23 39 H34 M23 43 H34" stroke="#111" stroke-width="1.2"></path>
</svg>
<svg class="a" style="left:1045px;top:77px" width="45" height="46" viewBox="0 0 45 46">
 <defs><linearGradient id="pg" x1="0" y1="0" x2="1" y2="1"><stop offset="0" stop-color="#f8f8f8"></stop><stop offset="1" stop-color="#d8d8d8"></stop></linearGradient></defs>
 <rect x="1" y="1" width="42.5" height="44" rx="3" fill="#c4c4c4" stroke="#151515" stroke-width="2"></rect>
 <path d="M7 5 H41 V43 H10 L7 40 V26 L5 24 V12 L7 10Z" fill="url(#pg)"></path>
 <path d="M23 9 Q26 9 25 16 L21 30 Q17 36 14 38 M25 16 Q28 28 40 31 Q42 33 36 33 Q28 32 16 34" fill="none" stroke="#e04050" stroke-width="1.3"></path>
 <rect x="10.5" y="30.5" width="29" height="12" rx="1.5" fill="#1a1008"></rect>
 <text x="25" y="41" font-family="Liberation Sans" font-weight="bold" font-size="11" fill="#f29a3a" text-anchor="middle" textLength="25" lengthAdjust="spacingAndGlyphs">PDF</text>
</svg>
<svg class="a" style="left:1109px;top:77px" width="23" height="23" viewBox="0 0 23 23">
 <defs><linearGradient id="ppg" x1="0" y1="0" x2="1" y2="1"><stop offset="0" stop-color="#fff"></stop><stop offset="1" stop-color="#b8cdea"></stop></linearGradient></defs>
 <path d="M0.5 0.5 H11 L16.5 6 V21.5 H0.5Z" fill="url(#ppg)" stroke="#9aaac0"></path>
 <circle cx="12" cy="13" r="5" fill="#d8ecf8" stroke="#4a6a8a" stroke-width="1.3"></circle>
 <path d="M15.5 16.5 L21 21.5" stroke="#c8a030" stroke-width="3"></path>
</svg>
<svg class="a" style="left:1109px;top:109px" width="24" height="21" viewBox="0 0 24 21">
 <defs><linearGradient id="psg" x1="0" y1="0" x2="1" y2="1"><stop offset="0" stop-color="#f0f4fc"></stop><stop offset="1" stop-color="#8aa4d8"></stop></linearGradient></defs>
 <path d="M1 3 Q4 0.5 9 1.5 V18 Q5 16 1 18.5Z" fill="#e4e4e6" stroke="#505050" stroke-width="1"></path>
 <rect x="9.5" y="3.5" width="13" height="16" fill="url(#psg)" stroke="#222" stroke-width="1.6"></rect>
</svg>
<svg class="a" style="left:1109px;top:139px" width="22" height="19" viewBox="0 0 22 19">
 <defs><linearGradient id="tg" x1="0" y1="0" x2="1" y2="1"><stop offset="0" stop-color="#9ab6f4"></stop><stop offset="1" stop-color="#2f58c8"></stop></linearGradient></defs>
 <rect x="0.5" y="0.5" width="21" height="18" rx="1.5" fill="#f4f6fa" stroke="#9aa4b4"></rect>
 <rect x="3" y="3" width="16" height="13" fill="url(#tg)"></rect>
 <path d="M5 6 H10 M5 9 H16 M5 11.5 H16" stroke="#c8d8fa" stroke-width="1"></path>
</svg>
<svg class="a" style="left:1245px;top:77px" width="39" height="49" viewBox="0 0 39 49">
 <path d="M5.5 22 V14 Q5.5 1 19.5 1 Q33.5 1 33.5 14 V22 H28 V14 Q28 6.5 19.5 6.5 Q11 6.5 11 14 V22Z" fill="#d9dde5" stroke="#111" stroke-width="1.8"></path>
 <rect x="1" y="21.5" width="36.5" height="26" fill="#f5a00c" stroke="#111" stroke-width="2"></rect>
 <circle cx="19.3" cy="31.5" r="4.5" fill="#34344a"></circle>
 <path d="M16.5 33 L15.5 40.5 H23 L22 33Z" fill="#34344a"></path>
</svg>
<svg class="a" style="left:1316px;top:77px" width="46" height="47" viewBox="0 0 46 47">
 <path d="M20 11 L9 26 M22 12 L35 35 M36 17 L21 29 M24 12 L24 26" stroke="#8a8a8a" stroke-width="1"></path>
 <g transform="translate(22 8) rotate(35)"><rect x="-5.5" y="-3" width="11" height="9" rx="1" fill="#b8951c"></rect><rect x="-5.5" y="-5.5" width="11" height="8.5" rx="1" fill="#f2d44a"></rect><rect x="-4" y="-4.5" width="6" height="3" fill="#fff6b0" opacity=".8"></rect></g><g transform="translate(38 15) rotate(35)"><rect x="-5.5" y="-3" width="11" height="9" rx="1" fill="#b83018"></rect><rect x="-5.5" y="-5.5" width="11" height="8.5" rx="1" fill="#f4603a"></rect><rect x="-4" y="-4.5" width="6" height="3" fill="#ffc0a8" opacity=".8"></rect></g><g transform="translate(7 28) rotate(35)"><rect x="-5.5" y="-3" width="11" height="9" rx="1" fill="#b83018"></rect><rect x="-5.5" y="-5.5" width="11" height="8.5" rx="1" fill="#f4603a"></rect><rect x="-4" y="-4.5" width="6" height="3" fill="#ffc0a8" opacity=".8"></rect></g><g transform="translate(22 31) rotate(35)"><rect x="-5.5" y="-3" width="11" height="9" rx="1" fill="#2a7a22"></rect><rect x="-5.5" y="-5.5" width="11" height="8.5" rx="1" fill="#58bb48"></rect><rect x="-4" y="-4.5" width="6" height="3" fill="#c8f4b0" opacity=".8"></rect></g><g transform="translate(37 37) rotate(35)"><rect x="-5.5" y="-3" width="11" height="9" rx="1" fill="#3654b8"></rect><rect x="-5.5" y="-5.5" width="11" height="8.5" rx="1" fill="#6f8ef0"></rect><rect x="-4" y="-4.5" width="6" height="3" fill="#d0dcff" opacity=".8"></rect></g>
</svg>
<svg class="a" style="left:1393px;top:77px" width="24" height="24" viewBox="0 0 24 24">
 <circle cx="12" cy="12" r="10.5" fill="#e4edf6" stroke="#1f3344" stroke-width="2.2"></circle>
 <text x="12" y="17.5" font-family="Liberation Sans" font-weight="bold" font-size="15" fill="#a32020" text-anchor="middle">?</text>
</svg>
<svg class="a" style="left:1393px;top:108px" width="24" height="23" viewBox="0 0 24 23">
 <circle cx="12" cy="11.5" r="10.5" fill="#2a7ad6" stroke="#173a6a" stroke-width="1.3"></circle>
 <circle cx="12" cy="6" r="1.6" fill="#f6d64a"></circle>
 <path d="M10 10 H12.8 V18" fill="none" stroke="#f6d64a" stroke-width="2.6"></path>
</svg>
<!-- SHEET -->
<div id="sheet" class="a"></div>
<div id="grid" class="a"></div>
<div class="a" style="left:0;top:201px;width:1891px;height:1px;background:#eee4ef"></div>
<div id="phead" class="a"></div>
<div id="stripes" class="a"></div>
<div id="pline" class="a"></div>
<div id="pink" class="a"></div>
<div id="yline" class="a"></div>
<!-- home icon -->
<svg class="a" style="left:29px;top:220px" width="80" height="80" viewBox="0 0 80 80">
 <circle cx="40" cy="39.3" r="35.6" fill="none" stroke="#c9c9c9" stroke-width="5.6"></circle>
 <path d="M19 42 L40 21 L61 42" fill="none" stroke="#cbcbcb" stroke-width="3.6" stroke-linecap="round" stroke-linejoin="round"></path>
 <path d="M24.5 42 L40 27 L55.5 42 V59 H44.5 V49 H36 V59 H24.5Z" fill="#cbcbcb"></path>
</svg>
<!-- left panel -->
<div class="f" style="left: 21.383px; top: 330.347px; width: auto; font-size: 20.5px; font-weight: bold; color: rgb(15, 45, 107); transform: scaleX(1.016);">PENGATURAN</div>
<div class="a" style="left:197px;top:317.8px;width:108px;height:28px;border:2.5px solid #120812;border-radius:5px;background:#683767;box-shadow:1px 2px 2px rgba(0,0,0,.35)"></div>
<div class="f" style="left: 218.641px; top: 323.917px; width: auto; font-size: 17.7px; font-weight: bold; color: rgb(240, 232, 244); transform: scaleX(0.958);">Refresh</div>
<div class="a" style="left:205px;top:354px;width:55px;height:24px;border:1px solid #a9a9a9;background:#fff"></div>
<div class="a" style="left:237px;top:356px;width:21px;height:20px;border:1px solid #d4d4d4;border-radius:2px;background:linear-gradient(#fff,#f2f2f2)"></div>
<div class="arr" style="left:243px;top:364px;border-left-width:4.6px;border-right-width:4.6px;border-top-width:5.5px;border-top-color:#111"></div>
<div class="f" style="left: 209.925px; top: 359.033px; width: auto; font-size: 16.5px; color: rgb(17, 17, 17); font-family: &quot;Liberation Serif&quot;; transform: scaleX(1.075);">19</div>
<div class="f" style="left: 22px; top: 380.686px; width: auto; font-size: 17.5px; font-weight: bold; color: rgb(17, 17, 17); transform: scaleX(0.989);">Jumlah Paragraf :</div>
<div class="f" style="left: 83.4px; top: 450.41px; width: auto; font-size: 14.4px; font-weight: bold; color: rgb(17, 17, 17); transform: scaleX(1.018);">Logo A :</div>
<div class="f" style="left: 85.4px; top: 497.21px; width: auto; font-size: 14.4px; font-weight: bold; color: rgb(17, 17, 17); transform: scaleX(1.006);">Logo B :</div>
<div class="a" style="left:161px;top:440px;width:141px;height:34px;border:1px solid #9c9ca0;background:#fff"></div>
<div class="a" style="left:269px;top:441.7px;width:31.6px;height:30.6px;border:1px solid #dadada;border-radius:3px;background:linear-gradient(#fff,#f5f5f5)"></div>
<div class="arr" style="left:276.8px;top:454px;border-left-width:7.7px;border-right-width:7.7px;border-top-width:8px;border-top-color:#000"></div>
<div class="f" style="left: 165.034px; top: 450.133px; width: auto; font-size: 16.5px; color: rgb(17, 17, 17); transform: scaleX(0.965);">Logo 1</div>
<div class="a" style="left:161px;top:488.2px;width:141px;height:33.6px;border:1px solid #9c9ca0;background:#fff"></div>
<div class="a" style="left:269px;top:489.8px;width:31.6px;height:30.6px;border:1px solid #dadada;border-radius:3px;background:linear-gradient(#fff,#f5f5f5)"></div>
<div class="arr" style="left:276.8px;top:502px;border-left-width:7.7px;border-right-width:7.7px;border-top-width:8px;border-top-color:#000"></div>
<div class="f" style="left: 165.058px; top: 498.033px; width: auto; font-size: 16.5px; color: rgb(17, 17, 17); transform: scaleX(0.941);">Kosong</div>
<!-- HAPUS DATA / Teks Editor -->
<div class="a" style="left:670px;top:233px;width:139px;height:52.7px;background:linear-gradient(#c01426,#a81024 55%,#900c1d)"></div>
<svg class="a" style="left:690px;top:241px" width="36" height="36" viewBox="0 0 36 36"><circle cx="18" cy="18" r="17" fill="#fff"></circle><path d="M10.5 11 L25.5 25 M25.5 11 L10.5 25" stroke="#a3182a" stroke-width="4"></path></svg>
<div class="f" style="left: 738.7px; top: 241.664px; width: auto; font-size: 14.1px; font-weight: bold; color: rgb(255, 255, 255); transform: scaleX(1.027);">HAPUS</div>
<div class="f" style="left: 738.7px; top: 263.464px; width: auto; font-size: 14.1px; font-weight: bold; color: rgb(255, 255, 255); transform: scaleX(1.025);">DATA</div>
<div class="a" style="left:820px;top:231.3px;width:75px;height:52.7px;border:2px solid #d8c6d8;border-radius:6px;background:linear-gradient(#8f5a8d,#6e3b6d 22%,#6a3869 80%,#5c2e5b);box-shadow:1px 2px 3px rgba(0,0,0,.45)"></div>
<div class="f" style="left: 843.5px; top: 241.834px; width: auto; font-size: 12.6px; font-weight: bold; color: rgb(255, 255, 255); transform: scaleX(1.055);">Teks</div>
<div class="f" style="left: 837.8px; top: 261.934px; width: auto; font-size: 12.6px; font-weight: bold; color: rgb(255, 255, 255); transform: scaleX(1.115);">Editor</div>
<!-- sheet title -->
<div class="f" style="left: 684.067px; top: 361.526px; width: auto; font-size: 36px; color: rgb(17, 17, 17); transform: scaleX(0.966);">Ketersediaan Guru &amp; Jumlah JP</div>
<!-- TABLE -->
<div class="a" style="left:438px;top:431px;width:498px;height:61px;background:#c0c0c0"></div>
<div class="a" style="left:936px;top:431px;width:491px;height:61px;background:#d4afd2"></div>
<div class="a" style="left:439px;top:492px;width:497px;height:52px;background:#f1f1f1"></div>
<div class="a" style="left:936px;top:492px;width:491px;height:52px;background:#f0e1ef"></div>
<div class="a tex" style="left:439px;top:544px;width:497px;height:52px"></div>
<div class="a" style="left:936px;top:544px;width:491px;height:52px;background:#e1c6df"></div>
<div class="a" style="left:439px;top:596px;width:497px;height:52px;background:#f1f1f1"></div>
<div class="a" style="left:936px;top:596px;width:491px;height:52px;background:#f0e1ef"></div>
<div class="a tex" style="left:439px;top:648px;width:497px;height:52px"></div>
<div class="a" style="left:936px;top:648px;width:491px;height:52px;background:#e1c6df"></div>
<div class="a" style="left:439px;top:700px;width:497px;height:52px;background:#f1f1f1"></div>
<div class="a" style="left:936px;top:700px;width:491px;height:52px;background:#f0e1ef"></div>
<div class="a tex" style="left:439px;top:752px;width:497px;height:52px"></div>
<div class="a" style="left:936px;top:752px;width:491px;height:52px;background:#e1c6df"></div>
<div class="a" style="left:439px;top:804px;width:497px;height:52px;background:#f1f1f1"></div>
<div class="a" style="left:936px;top:804px;width:491px;height:52px;background:#f0e1ef"></div>
<div class="a tex" style="left:439px;top:856px;width:497px;height:52px"></div>
<div class="a" style="left:936px;top:856px;width:491px;height:52px;background:#e1c6df"></div>
<div class="a" style="left:439px;top:908px;width:497px;height:52px;background:#f1f1f1"></div>
<div class="a" style="left:936px;top:908px;width:491px;height:52px;background:#f0e1ef"></div>
<div class="a tex" style="left:439px;top:960px;width:497px;height:52px"></div>
<div class="a" style="left:936px;top:960px;width:491px;height:52px;background:#e1c6df"></div>
<div class="a" style="left:439px;top:1012px;width:497px;height:9px;background:#f1f1f1"></div>
<div class="a" style="left:936px;top:1012px;width:491px;height:9px;background:#f0e1ef"></div>
<div class="a dot" style="top:492px"></div>
<div class="a dot" style="top:544px"></div>
<div class="a dot" style="top:596px"></div>
<div class="a dot" style="top:648px"></div>
<div class="a dot" style="top:700px"></div>
<div class="a dot" style="top:752px"></div>
<div class="a dot" style="top:804px"></div>
<div class="a dot" style="top:856px"></div>
<div class="a dot" style="top:908px"></div>
<div class="a dot" style="top:960px"></div>
<div class="a dot" style="top:1012px"></div>
<div class="a" style="left:438px;top:431px;width:990px;height:1px;background:#111"></div>
<div class="a" style="left:438px;top:492px;width:1px;height:529px;background:#000"></div>
<div class="a" style="left:512px;top:492px;width:1px;height:529px;background:#000"></div>
<div class="a" style="left:936px;top:431px;width:1px;height:590px;background:#000"></div>
<div class="a" style="left:1150px;top:431px;width:1px;height:590px;background:#000"></div>
<div class="a" style="left:1427px;top:431px;width:1px;height:590px;background:#4a4a4a"></div>
<div class="f th" style="left: 684.516px; top: 452.993px; width: auto; font-size: 19.5px; transform: scaleX(1.084);">Mata Pelajaran</div>
<div class="f th" style="left: 980px; top: 438.993px; width: auto; font-size: 19.5px; transform: scaleX(1.060);">Jumlah Guru</div>
<div class="f th" style="left: 1001.8px; top: 469.493px; width: auto; font-size: 19.5px; transform: scaleX(1.070);">Tersedia</div>
<div class="f th" style="left: 1158.7px; top: 438.993px; width: auto; font-size: 19.5px; transform: scaleX(1.031);">Jumlah JP yang bisa diajar</div>
<div class="f th" style="left: 1258.7px; top: 468.993px; width: auto; font-size: 19.5px; transform: scaleX(1.086);">Guru*</div>
<div class="a tc" style="left:426px;top:510.07px">1</div>
<div class="a tc" style="left:993px;top:510.07px">1</div>
<div class="a tc" style="left:1221.5px;top:510.07px">20</div>
<div class="a tc" style="left:1257.6px;top:510.07px">JP</div>
<div class="a tc" style="left:426px;top:562.07px">2</div>
<div class="f td" style="left: 530.954px; top: 562.07px; width: auto; transform: scaleX(1.046);">Kimia</div>
<div class="a tc" style="left:993px;top:562.07px">4</div>
<div class="a tc" style="left:1221.5px;top:562.07px">18</div>
<div class="a tc" style="left:1257.6px;top:562.07px">JP</div>
<div class="a tc" style="left:426px;top:614.07px">3</div>
<div class="f td" style="left: 530.998px; top: 614.07px; width: auto; transform: scaleX(1.001);">Fisika</div>
<div class="a tc" style="left:993px;top:614.07px">4</div>
<div class="a tc" style="left:1221.5px;top:614.07px">20</div>
<div class="a tc" style="left:1257.6px;top:614.07px">JP</div>
<div class="a tc" style="left:426px;top:666.07px">4</div>
<div class="f td" style="left: 530.862px; top: 666.07px; width: auto; transform: scaleX(1.137);">Informatika</div>
<div class="a tc" style="left:993px;top:666.07px">3</div>
<div class="a tc" style="left:1221.5px;top:666.07px">20</div>
<div class="a tc" style="left:1257.6px;top:666.07px">JP</div>
<div class="a tc" style="left:426px;top:718.07px">5</div>
<div class="f td" style="left: 530.879px; top: 718.07px; width: auto; transform: scaleX(1.120);">Matematika TL</div>
<div class="a tc" style="left:993px;top:718.07px">2</div>
<div class="a tc" style="left:1221.5px;top:718.07px">24</div>
<div class="a tc" style="left:1257.6px;top:718.07px">JP</div>
<div class="a tc" style="left:426px;top:770.07px">6</div>
<div class="f td" style="left: 532px; top: 770.07px; width: auto; transform: scaleX(1.055);">Sosiologi</div>
<div class="a tc" style="left:993px;top:770.07px">4</div>
<div class="a tc" style="left:1221.5px;top:770.07px">20</div>
<div class="a tc" style="left:1257.6px;top:770.07px">JP</div>
<div class="a tc" style="left:426px;top:822.07px">7</div>
<div class="f td" style="left: 530.896px; top: 822.07px; width: auto; transform: scaleX(1.103);">Ekonomi</div>
<div class="a tc" style="left:993px;top:822.07px">1</div>
<div class="a tc" style="left:1221.5px;top:822.07px">20</div>
<div class="a tc" style="left:1257.6px;top:822.07px">JP</div>
<div class="a tc" style="left:426px;top:874.07px">8</div>
<div class="f td" style="left: 530.917px; top: 874.07px; width: auto; transform: scaleX(1.082);">Geografi</div>
<div class="a tc" style="left:993px;top:874.07px">1</div>
<div class="a tc" style="left:1221.5px;top:874.07px">20</div>
<div class="a tc" style="left:1257.6px;top:874.07px">JP</div>
<div class="a tc" style="left:426px;top:926.07px">9</div>
<div class="f td" style="left: 532px; top: 926.07px; width: auto; transform: scaleX(1.149);">Antropologi</div>
<div class="a tc" style="left:993px;top:926.07px">4</div>
<div class="a tc" style="left:1221.5px;top:926.07px">22</div>
<div class="a tc" style="left:1257.6px;top:926.07px">JP</div>
<div class="a tc" style="left:426px;top:978.07px">10</div>
<div class="f td" style="left: 530.944px; top: 978.07px; width: auto; transform: scaleX(1.055);">Bahasa Indonesia TL</div>
<div class="a tc" style="left:993px;top:978.07px">2</div>
<div class="a tc" style="left:1221.5px;top:978.07px">20</div>
<div class="a tc" style="left:1257.6px;top:978.07px">JP</div>
<!-- SCROLLBARS / STATUS -->
<div class="a" style="left:1891px;top:199px;width:29px;height:848px;background:#dfe3e9"></div>
<div class="a" style="left:1891px;top:212px;width:26px;height:53px;background:linear-gradient(90deg,#e9ecf0,#dde1e7)"></div>
<div class="a" style="left:1916px;top:199px;width:1.5px;height:848px;background:#8e9399"></div>
<div class="a" style="left:1892.5px;top:202px;width:23px;height:10.5px;border:1.5px solid #a2a7ad;background:#fff"></div>
<div class="a" style="left:1896px;top:221.5px;width:0;height:0;border-left:7.6px solid transparent;border-right:7.6px solid transparent;border-bottom:8.5px solid #4f5358"></div>
<div class="a" style="left:1891.5px;top:265px;width:23.5px;height:93.5px;border:1px solid #a6abb3;border-radius:2px;background:linear-gradient(90deg,#f3f5f8,#e4e7ec)"></div>
<div class="a" style="left:1899px;top:308px;width:8px;height:7px;background:repeating-linear-gradient(#6f747a 0,#6f747a 1px,transparent 1px,transparent 2px)"></div>
<div class="a" style="left:1896px;top:1004px;width:0;height:0;border-left:7.5px solid transparent;border-right:7.5px solid transparent;border-top:8.5px solid #4f5358"></div>
<div class="a" style="left:1891px;top:1020px;width:25px;height:1px;background:#c8ccd2"></div>
<div id="hscroll" class="a"></div>
<div class="a" style="left:8px;top:1025px;width:0;height:0;border-top:8.5px solid transparent;border-bottom:8.5px solid transparent;border-right:9.5px solid #4f5358"></div>
<div class="a" style="left:778px;top:1021.5px;width:794px;height:24px;border:1px solid #a6abb3;border-radius:2px;background:linear-gradient(#f1f3f6,#e3e6eb)"></div>
<div class="a" style="left:1172px;top:1030px;width:7px;height:7px;background:repeating-linear-gradient(90deg,#6f747a 0,#6f747a 1px,transparent 1px,transparent 2px)"></div>
<div class="a" style="left:1863px;top:1025.5px;width:0;height:0;border-top:8px solid transparent;border-bottom:8px solid transparent;border-left:9px solid #4f5358"></div>
<div class="a" style="left:1880px;top:1022px;width:11px;height:24px;border:1.5px solid #85898f;background:#fff"></div>
<div class="a" style="left:1883px;top:1025px;width:1px;height:17px;background:#8a8e94"></div>
<div id="status" class="a"></div>
<div class="f" style="left: 7.684px; top: 1057.13px; width: auto; font-size: 14.5px; color: rgb(58, 63, 70); transform: scaleX(1.015);">Ready</div>
<div class="f" style="left: 67px; top: 1057.13px; width: auto; font-size: 14.5px; color: rgb(58, 63, 70); transform: scaleX(1.038);">Calculate</div>
<div class="a" style="left:140px;top:1050px;width:1px;height:28px;background:#aeb3b9;box-shadow:1px 0 0 #f4f5f7"></div>
<div class="a" style="left:184px;top:1050px;width:1px;height:28px;background:#aeb3b9;box-shadow:1px 0 0 #f4f5f7"></div>
<svg class="a" style="left:151px;top:1051px" width="22" height="21" viewBox="0 0 22 21">
 <rect x="0.5" y="2.5" width="21" height="18" fill="#eef3fb" stroke="#3a5fa8"></rect>
 <rect x="0.5" y="2.5" width="21" height="4" fill="#5a82c8"></rect>
 <path d="M1 10.5 H21 M1 14.5 H21 M6 7 V20 M13 7 V20" stroke="#5a82c8" stroke-width="1"></path>
 <circle cx="4.5" cy="4" r="3.5" fill="#e04020"></circle>
</svg>
<div class="a" style="left:1571px;top:1050px;width:1px;height:28px;background:#aeb3b9;box-shadow:1px 0 0 #f4f5f7"></div>
<div class="a" style="left:1576.5px;top:1048.8px;width:27px;height:27.5px;border:1px solid #e3b955;border-radius:3px;background:linear-gradient(#fde9a0,#fcd874)"></div>
<svg class="a" style="left:1580px;top:1054px" width="20" height="17" viewBox="0 0 20 17"><rect x="0.5" y="0.5" width="19" height="16" fill="#fff" stroke="#333" stroke-width="1.4"></rect><path d="M0.5 4.5 H19.5 M0.5 8.5 H19.5 M0.5 12.5 H19.5 M7 0.5 V16.5 M13 0.5 V16.5" stroke="#333" stroke-width="1.6"></path></svg>
<svg class="a" style="left:1607px;top:1054px" width="21" height="18" viewBox="0 0 21 18"><rect x="0.8" y="0.8" width="19.4" height="16.4" fill="#b0b3b8" stroke="#555" stroke-width="1.4"></rect><rect x="5" y="3.5" width="11" height="11" fill="#f4f4f4" stroke="#555" stroke-width="1"></rect><path d="M7.5 6.5 H13.5 M7.5 9 H13.5 M7.5 11.5 H13.5" stroke="#666"></path></svg>
<svg class="a" style="left:1635px;top:1054px" width="21" height="18" viewBox="0 0 21 18"><rect x="0.8" y="0.8" width="19.4" height="16.4" fill="#b0b3b8" stroke="#555" stroke-width="1.4"></rect><rect x="3" y="2" width="5" height="8" fill="#f4f4f4" stroke="#555" stroke-width=".8"></rect><rect x="9" y="2" width="5" height="8" fill="#f4f4f4" stroke="#555" stroke-width=".8"></rect></svg>
<div class="f" style="left: 1670.66px; top: 1056.61px; width: auto; font-size: 14.4px; color: rgb(58, 63, 70); transform: scaleX(1.044);">100%</div>
<div class="a" style="left:1741px;top:1061.5px;width:152px;height:1.5px;background:#8c9096;box-shadow:0 1px 0 #f4f5f7"></div>
<div class="a" style="left:1719px;top:1051px;width:22.5px;height:22.5px;border:1px solid #8f949b;border-radius:50%;background:linear-gradient(#fff,#e4e7eb)"></div>
<div class="a" style="left:1724px;top:1061px;width:12px;height:3px;background:#5a5e64"></div>
<svg class="a" style="left:1811px;top:1053px" width="14" height="19" viewBox="0 0 14 19"><path d="M1 1 H13 V13 L7 18 L1 13Z" fill="#f6f7f9" stroke="#7c8188" stroke-width="1.2"></path></svg>
<div class="a" style="left:1893px;top:1051px;width:22.5px;height:22.5px;border:1px solid #8f949b;border-radius:50%;background:linear-gradient(#fff,#e4e7eb)"></div>
<div class="a" style="left:1898.5px;top:1061px;width:12px;height:3px;background:#5a5e64"></div>
<div class="a" style="left:1903px;top:1056.5px;width:3px;height:12px;background:#5a5e64"></div>
<!-- MENU DROPDOWN -->
<div class="a" style="left:335.5px;top:174px;width:359px;height:370px;background:#fff;border:1px solid #c6cacf;box-shadow:2px 2px 3px rgba(0,0,0,.18)"></div>
<div class="a" style="left:337px;top:175px;width:356px;height:29px;background:#eef0f3"></div>
<div class="a" style="left:337px;top:390px;width:356px;height:28.5px;background:#eef0f3"></div>
<div class="a" style="left:337.5px;top:266.5px;width:354.5px;height:60.5px;border:1px solid #e7c56a;border-radius:2px;background:linear-gradient(#fdf3c4 0%,#fce89a 35%,#fbdc78 55%,#fce08a 80%,#fef3c0 100%)"></div>
<div class="f mi" style="left: 343.551px; top: 183.102px; width: auto; transform: scaleX(1.049);">Persiapan</div>
<div class="f mi" style="left: 399.476px; top: 228.102px; width: auto; transform: scaleX(1.023);">Rencana Aksi</div>
<div class="f mi" style="left: 399.455px; top: 290.103px; width: auto; transform: scaleX(1.044);">Ketersediaan Guru</div>
<div class="f mi" style="left: 399.246px; top: 352.902px; width: auto; transform: scaleX(1.054);">Ketersediaan Ruangan</div>
<div class="f mi" style="left: 343.255px; top: 398.202px; width: auto; transform: scaleX(1.044);">Referensi</div>
<div class="f mi" style="left: 399.231px; top: 443.002px; width: auto; transform: scaleX(1.069);">Referensi Mapel Pendukung Studi</div>
<div class="f mi" style="left: 399.234px; top: 505.102px; width: auto; transform: scaleX(1.065);">Referensi Struktur Mapel</div>
<!-- MENU ICONS -->
<svg class="a" style="left:344px;top:213px" width="48" height="44" viewBox="0 0 48 44">
 <rect x="1" y="1" width="46" height="42" rx="3" fill="#eaf1f8" stroke="#222" stroke-width="1.4"></rect>
 <path d="M1 11 V4 Q1 1 4 1 H44 Q47 1 47 4 V11Z" fill="#e0303f" stroke="#222" stroke-width="1.2"></path>
 <path d="M8 4 H40" stroke="#a01828" stroke-width="1.2"></path>
 <circle cx="8" cy="5" r="1.5" fill="#222"></circle><circle cx="40" cy="5" r="1.5" fill="#222"></circle>
 <rect x="16.5" y="13.5" width="7.5" height="7" rx="1.2" fill="#2d3c4e"></rect><rect x="27.0" y="13.5" width="7.5" height="7" rx="1.2" fill="#2d3c4e"></rect><rect x="37.5" y="13.5" width="7.5" height="7" rx="1.2" fill="#2d3c4e"></rect><rect x="7.0" y="23.0" width="5" height="7" rx="1" fill="#9ac0e8" stroke="#223" stroke-width=".8"></rect><rect x="16.5" y="23.0" width="7.5" height="7" rx="1.2" fill="#2d3c4e"></rect><rect x="27.0" y="23.0" width="7.5" height="7" rx="1.2" fill="#2d3c4e"></rect><rect x="6.0" y="32.5" width="7.5" height="7" rx="1.2" fill="#2d3c4e"></rect><rect x="16.5" y="32.5" width="7.5" height="7" rx="1.2" fill="#2d3c4e"></rect><rect x="27.0" y="32.5" width="7.5" height="7" rx="1.2" fill="#2d3c4e"></rect>
 <rect x="37" y="23.5" width="6" height="6" rx="1" fill="#8ab0e0" stroke="#223" stroke-width=".8"></rect>
 <path d="M47 26 L33 43 H47Z" fill="#cde6f4" stroke="#222" stroke-width="1.2"></path>
 <path d="M36 39 L44 30" stroke="#222" stroke-width="1"></path>
</svg>
<svg class="a" style="left:348px;top:273px" width="42" height="48" viewBox="0 0 42 48">
 <rect x="1" y="3.5" width="32" height="43.5" rx="2" fill="#a85848" stroke="#3a2020" stroke-width="1.4"></rect>
 <rect x="5" y="8" width="24" height="35" fill="#f4f4f8" stroke="#3a2020" stroke-width="1"></rect>
 <path d="M11 9.5 V5 Q11 2.5 14 2.5 H15.5 Q17 0 18.5 2.5 H20 Q23 2.5 23 5 V9.5Z" fill="#f6d860" stroke="#3a2020" stroke-width="1"></path>
 <circle cx="17" cy="17.5" r="3" fill="#f8b8a8" stroke="#3a2020" stroke-width="1"></circle>
 <path d="M11 27 Q11 21 17 21 Q23 21 23 27Z" fill="#8acb78" stroke="#3a2020" stroke-width="1"></path>
 <path d="M9 32 H25 M9 35 H25 M9 38 H21" stroke="#555" stroke-width="1.2"></path>
 <path d="M35.5 17 L37.5 13 L39.5 17 V46 H35.5Z" fill="#e87878" stroke="#3a2020" stroke-width="1"></path>
</svg>
<svg class="a" style="left:344px;top:335px" width="48" height="48" viewBox="0 0 48 48">
 <rect x="1" y="1" width="36" height="45.5" rx="2" fill="#e8745a" stroke="#3a2020" stroke-width="1.4"></rect>
 <path d="M2 40.5 H36 M2 43.5 H36" stroke="#f6f0ea" stroke-width="2"></path>
 <rect x="6" y="6" width="13" height="13" fill="#f0f0f0" stroke="#3a2020" stroke-width=".8" stroke-dasharray="1.5 1"></rect>
 <rect x="8.5" y="8.5" width="8" height="8" fill="#b87ae0"></rect>
 <circle cx="10" cy="31" r="5.5" fill="#6ec0ec" stroke="#3a2020" stroke-width="1.3"></circle>
 <path d="M17 24 L31 19 L34 27 L20 32Z" fill="#f3dc6a" stroke="#3a2020" stroke-width="1.2"></path>
 <circle cx="32" cy="15" r="3.5" fill="#c05040" stroke="#3a2020" stroke-width="1"></circle>
 <path d="M25 7 H33 M27 10 H33" stroke="#3a2020" stroke-width="1"></path>
 <path d="M40 6 Q43.5 2 46 6 V38 L43 46 L40 38Z" fill="#4a4a55" stroke="#222" stroke-width="1"></path>
 <rect x="40" y="11" width="6" height="7" fill="#f0d040"></rect>
</svg>
<svg class="a" style="left:345px;top:425px" width="47" height="49" viewBox="0 0 47 49">
 <rect x="4" y="1" width="37" height="47" rx="2" fill="#16b6f0" stroke="#221a3a" stroke-width="1.4"></rect>
 <rect x="4" y="1" width="6" height="47" fill="#6a48b8" stroke="#221a3a" stroke-width="1"></rect>
 <rect x="1" y="12" width="6" height="30" rx="2" fill="#b82838" stroke="#221a3a" stroke-width="1"></rect>
 <rect x="14" y="10" width="22" height="17" rx="2" fill="#fff" stroke="#221a3a" stroke-width="1"></rect>
 <path d="M17 14 H33 M17 17.5 H31 M22 23 H33" stroke="#666" stroke-width="1.1"></path>
 <path d="M15 43 H37" stroke="#9aa" stroke-width="2.2" stroke-linecap="round"></path>
 <rect x="40.5" y="19" width="5" height="6" fill="#f2d040"></rect><rect x="40.5" y="25" width="5" height="6" fill="#e84050"></rect><rect x="40.5" y="31" width="5" height="6" fill="#30c080"></rect><rect x="40.5" y="37" width="5" height="6" fill="#7050c8"></rect>
 <rect x="32" y="5.5" width="13.5" height="12.5" rx="2.5" fill="#22c07a" stroke="#221a3a" stroke-width="1"></rect>
 <path d="M35.5 11.5 L38 14 L42.5 9" fill="none" stroke="#fff" stroke-width="1.6"></path>
</svg>
<svg class="a" style="left:348px;top:488px" width="42" height="48" viewBox="0 0 42 48">
 <rect x="1" y="1" width="34" height="46" rx="2.5" fill="#7a9a8c" stroke="#1f2a26" stroke-width="1.5"></rect>
 <path d="M6 1 V40" stroke="#5a7a6c" stroke-width="1.2"></path>
 <rect x="1" y="39" width="34" height="8" rx="2" fill="#6a8a7c" stroke="#1f2a26" stroke-width="1.3"></rect>
 <path d="M5 43 H32" stroke="#c8d4cc" stroke-width="1.5"></path>
 <rect x="9" y="9" width="19" height="4" fill="#f8f2d0"></rect>
 <rect x="9" y="13.5" width="19" height="8" rx="3" fill="#e6a0d8" stroke="#1f2a26" stroke-width="1"></rect>
 <rect x="13" y="16" width="11" height="3" fill="#556"></rect>
 <rect x="35" y="5" width="5.5" height="8" fill="#f4d84a" stroke="#1f2a26" stroke-width=".6"></rect><rect x="35" y="13" width="5.5" height="8" fill="#8acb78" stroke="#1f2a26" stroke-width=".6"></rect><rect x="35" y="21" width="5.5" height="8" fill="#3a80d8" stroke="#1f2a26" stroke-width=".6"></rect><rect x="35" y="29" width="5.5" height="7" fill="#f090d8" stroke="#1f2a26" stroke-width=".6"></rect>
</svg>
<!-- cursor -->
<svg class="a" style="left:636px;top:303px;z-index:50" width="22" height="30" viewBox="0 0 22 30"><path d="M1.5 1.5 V23 L6.5 18.5 L10.5 27.5 L14 26 L10 17.5 L17 17.5 Z" fill="#fff" stroke="#000" stroke-width="1.3" stroke-linejoin="round"></path></svg>

</body></html>
